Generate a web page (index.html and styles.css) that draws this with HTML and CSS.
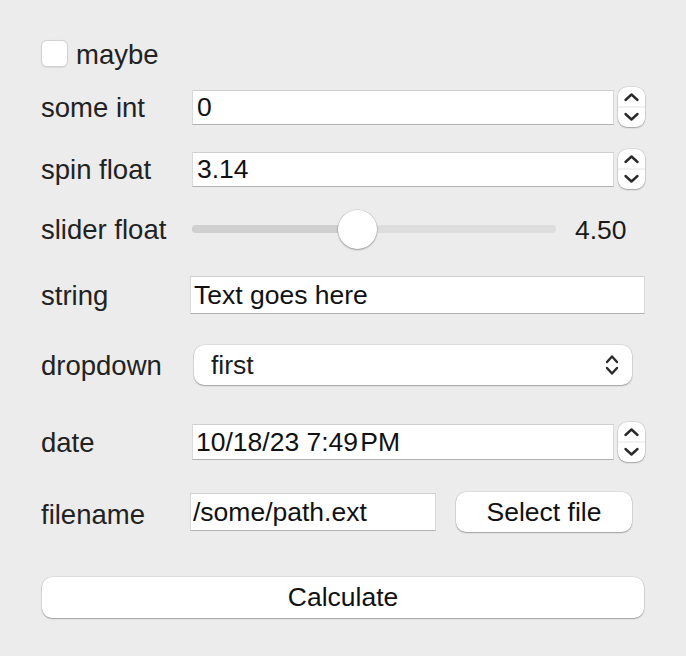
FILE: index.html
```html
<!DOCTYPE html>
<html>
<head>
<meta charset="utf-8">
<link rel="stylesheet" href="styles.css">
</head>
<body>
<main class="form">
  <div class="row-check">
    <span class="checkbox"></span><span class="check-label">maybe</span>
  </div>

  <div class="row row-int">
    <span class="lbl">some int</span>
    <div class="spin">
      <div class="input">0</div>
      <div class="stepper">
        <svg width="27" height="40" viewBox="0 0 27 40"><line x1="0" y1="20" x2="27" y2="20" class="divider"/><polyline points="7.5,13 13.5,7.5 19.5,13" class="chev"/><polyline points="7.5,27 13.5,32.5 19.5,27" class="chev"/></svg>
      </div>
    </div>
  </div>

  <div class="row row-float">
    <span class="lbl">spin float</span>
    <div class="spin">
      <div class="input">3.14</div>
      <div class="stepper">
        <svg width="27" height="40" viewBox="0 0 27 40"><line x1="0" y1="20" x2="27" y2="20" class="divider"/><polyline points="7.5,13 13.5,7.5 19.5,13" class="chev"/><polyline points="7.5,27 13.5,32.5 19.5,27" class="chev"/></svg>
      </div>
    </div>
  </div>

  <div class="row row-slider">
    <span class="lbl">slider float</span>
    <div class="slider">
      <div class="track">
        <div class="fill" style="width:45.6%"></div>
        <div class="knob" style="left:45.6%"></div>
      </div>
      <span class="value">4.50</span>
    </div>
  </div>

  <div class="row row-string">
    <span class="lbl">string</span>
    <div class="input input-string">Text goes here</div>
  </div>

  <div class="row row-select">
    <span class="lbl">dropdown</span>
    <div class="select">
      <span>first</span>
      <svg width="14" height="24" viewBox="0 0 14 24"><polyline points="2,9 7,3.5 12,9" class="chev"/><polyline points="2,15 7,20.5 12,15" class="chev"/></svg>
    </div>
  </div>

  <div class="row row-date">
    <span class="lbl">date</span>
    <div class="spin">
      <div class="input input-date">10/18/23 7:49&#8202;PM</div>
      <div class="stepper">
        <svg width="27" height="40" viewBox="0 0 27 40"><line x1="0" y1="20" x2="27" y2="20" class="divider"/><polyline points="7.5,13 13.5,7.5 19.5,13" class="chev"/><polyline points="7.5,27 13.5,32.5 19.5,27" class="chev"/></svg>
      </div>
    </div>
  </div>

  <div class="row row-file">
    <span class="lbl lbl-file">filename</span>
    <div class="file">
      <div class="input input-path">/some/path.ext</div>
      <div class="btn">Select file</div>
    </div>
  </div>

  <div class="btn calc">Calculate</div>
</main>
</body>
</html>
```

FILE: styles.css
```css
html, body {
  margin: 0;
  padding: 0;
}
body {
  width: 686px;
  height: 656px;
  overflow: hidden;
  background: #ececec;
  font-family: "Liberation Sans", Arial, sans-serif;
  font-size: 26.5px;
  color: #1c1c1c;
}
.form {
  padding: 40px 41px 0 41px;
}

/* checkbox row */
.row-check {
  display: flex;
  align-items: center;
  gap: 8px;
  height: 27px;
}
.checkbox {
  width: 27px;
  height: 27px;
  box-sizing: border-box;
  background: #fff;
  border: 1px solid #d2d2d2;
  border-radius: 6px;
  box-shadow: 0 0.5px 1px rgba(0,0,0,0.08);
}
.check-label {
  font-size: 27.5px;
  color: #222;
  padding-top: 3px;
}

/* generic rows */
.row {
  display: grid;
  grid-template-columns: 149px 1fr;
  align-items: center;
  height: 40px;
}
.lbl {
  font-size: 27.5px;
  color: #222;
  white-space: nowrap;
  padding-top: 2px;
}
.lbl-file {
  padding-top: 5px;
}
.row-int { margin-top: 20px; }
.row-float { margin-top: 22px; }
.row-slider { margin-top: 20px; }
.row-string { margin-top: 27px; height: 38px; }
.row-select { margin-top: 31px; }
.row-date { margin-top: 37px; }
.row-file { margin-top: 30px; }

/* text inputs */
.input {
  box-sizing: border-box;
  height: 35px;
  padding: 0 4px;
  display: flex;
  align-items: center;
  background: #fff;
  border: 1px solid #dadada;
  border-top-color: #d0d0d0;
  border-bottom-color: #b2b2b2;
  color: #111;
  white-space: nowrap;
  overflow: hidden;
}
.spin {
  display: flex;
  align-items: center;
  gap: 4px;
  margin-left: 2px;
}
.spin .input {
  flex: 1;
}
.input-string {
  height: 38px;
  padding-left: 3px;
}
.input-date {
  height: 36px;
  padding-left: 3px;
}
.input-path {
  width: 246px;
  height: 38px;
  padding-left: 2px;
}

/* stepper */
.stepper {
  width: 27px;
  height: 40px;
  flex: none;
  background: #fff;
  border-radius: 9px;
  box-shadow: 0 0 0 0.5px rgba(0,0,0,0.14), 0 1px 1.5px rgba(0,0,0,0.25);
}
.stepper svg {
  display: block;
}
.divider {
  stroke: #e4e4e4;
  stroke-width: 1;
}
.chev {
  fill: none;
  stroke: #2a2a2a;
  stroke-width: 2.4;
  stroke-linecap: round;
  stroke-linejoin: round;
}

/* slider */
.slider {
  display: flex;
  align-items: center;
  margin-left: 2px;
}
.track {
  position: relative;
  width: 364px;
  height: 8px;
  border-radius: 4px;
  background: #dddddd;
}
.fill {
  height: 100%;
  border-radius: 4px;
  background: #d0d0d0;
}
.knob {
  position: absolute;
  top: 50%;
  width: 39px;
  height: 39px;
  margin-top: -19.5px;
  margin-left: -19.5px;
  border-radius: 50%;
  background: #fff;
  box-shadow: 0 0 0 0.5px rgba(0,0,0,0.14), 0 1px 2px rgba(0,0,0,0.3);
}
.value {
  margin-left: 19px;
  padding-top: 3px;
  color: #1a1a1a;
}

/* dropdown */
.select {
  box-sizing: border-box;
  height: 40px;
  margin-left: 4px;
  margin-right: 13px;
  padding: 0 13px 0 17px;
  display: flex;
  align-items: center;
  justify-content: space-between;
  background: #fff;
  border-radius: 10px;
  box-shadow: 0 0 0 0.5px rgba(0,0,0,0.12), 0 1px 1.5px rgba(0,0,0,0.28);
  color: #1c1c1c;
}
.select svg {
  display: block;
}

/* file row */
.file {
  display: flex;
  align-items: center;
  gap: 20px;
  margin-right: 13px;
}
.btn {
  box-sizing: border-box;
  height: 40px;
  display: flex;
  align-items: center;
  justify-content: center;
  background: #fff;
  border-radius: 10px;
  box-shadow: 0 0 0 0.5px rgba(0,0,0,0.12), 0 1px 1.5px rgba(0,0,0,0.28);
  color: #111;
}
.file .btn {
  flex: 1;
}
.calc {
  margin: 45px 1px 0 1px;
  height: 41px;
}
```
